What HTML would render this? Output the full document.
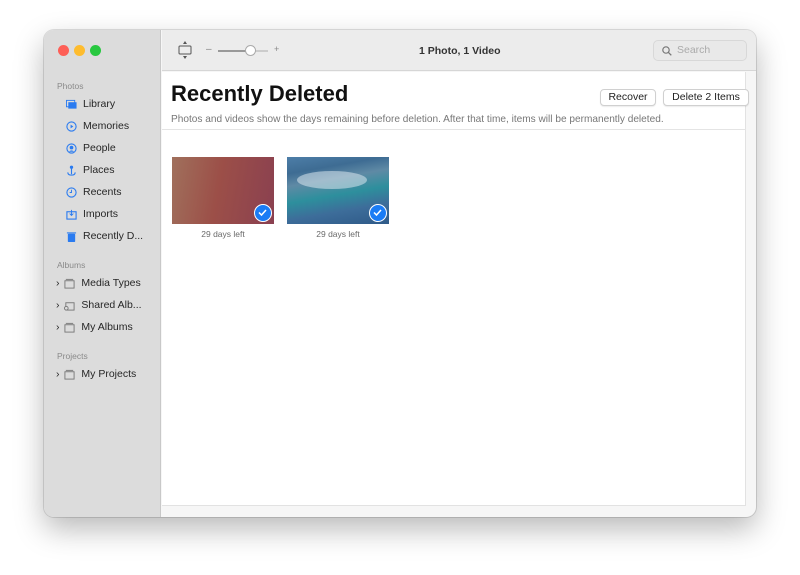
<!DOCTYPE html>
<html><head><style>
*{margin:0;padding:0;box-sizing:border-box}
body{width:800px;height:575px;background:#fff;font-family:"Liberation Sans",sans-serif;position:relative;overflow:hidden}
.win{position:absolute;left:44px;top:30px;width:712px;height:487px;border-radius:10px;overflow:hidden;background:#f6f6f6;box-shadow:0 12px 30px rgba(0,0,0,.28),0 0 0 1px rgba(0,0,0,.12)}
.side{position:absolute;left:0;top:0;width:117px;height:487px;background:#dcdcdc;border-right:1px solid #c8c8c8}
.dot{position:absolute;top:15px;width:11px;height:11px;border-radius:50%}
.sec{position:absolute;left:13px;font-size:8.5px;color:#8a8a8a}
.it{position:absolute;left:22px;font-size:10.5px;color:#262626;display:flex;align-items:center;gap:6px}
.ch{left:12px;gap:4px}
.ic{width:11px;height:11px;display:inline-block}
.tb{position:absolute;left:118px;top:0;right:0;height:41px;background:#ececec;border-bottom:1px solid #d6d6d6}
.main{position:absolute;left:118px;top:42px;width:584px;height:434px;background:#fff;border-right:1px solid #e2e2e2;border-bottom:1px solid #e2e2e2}
.btn{position:absolute;top:59px;height:17px;background:#fff;border:1px solid #d0d0d0;border-radius:4px;font-size:10.5px;color:#222;text-align:center;line-height:15px;box-shadow:0 1px 1px rgba(0,0,0,.08)}
.th{position:absolute;top:127px;width:102px;height:67px}
.chk{position:absolute;right:2px;bottom:2px;width:18px;height:18px;border-radius:50%;background:#1a7cf5;border:1.5px solid #fff}
.cap{position:absolute;top:199px;width:102px;text-align:center;font-size:8.5px;color:#6a6a6a}
</style></head><body>
<div class="win">
 <div class="side">
  <div class="dot" style="left:14px;background:#fe5f57"></div>
  <div class="dot" style="left:30px;background:#febc2e"></div>
  <div class="dot" style="left:46px;background:#28c840"></div>
  <div class="sec" style="top:51px">Photos</div>
  <div class="it" style="top:68px"><svg class="ic" viewBox="0 0 12 12"><rect x="0.5" y="1.5" width="9" height="7" fill="none" stroke="#2a7bf0"/><rect x="2.5" y="3.5" width="9" height="7" fill="#2a7bf0"/></svg>Library</div>
  <div class="it" style="top:90px"><svg class="ic" viewBox="0 0 12 12"><circle cx="6" cy="6" r="5" fill="none" stroke="#2a7bf0" stroke-width="1.2"/><path d="M5 4l3 2-3 2z" fill="#2a7bf0"/></svg>Memories</div>
  <div class="it" style="top:112px"><svg class="ic" viewBox="0 0 12 12"><circle cx="6" cy="6" r="5" fill="none" stroke="#2a7bf0" stroke-width="1.2"/><circle cx="6" cy="5" r="2" fill="#2a7bf0"/><path d="M3 9.5q3-3 6 0" fill="#2a7bf0"/></svg>People</div>
  <div class="it" style="top:134px"><svg class="ic" viewBox="0 0 12 12"><circle cx="6" cy="2.5" r="1.8" fill="#2a7bf0"/><path d="M6 4v6M2 8q0 3 4 3t4-3" stroke="#2a7bf0" stroke-width="1.2" fill="none"/></svg>Places</div>
  <div class="it" style="top:156px"><svg class="ic" viewBox="0 0 12 12"><circle cx="6" cy="6" r="5" fill="none" stroke="#2a7bf0" stroke-width="1.2"/><path d="M6 3v3H4" stroke="#2a7bf0" fill="none"/></svg>Recents</div>
  <div class="it" style="top:178px"><svg class="ic" viewBox="0 0 12 12"><rect x="1" y="3" width="10" height="8" fill="none" stroke="#2a7bf0" stroke-width="1.2"/><path d="M6 1v6M4 5l2 2 2-2" stroke="#2a7bf0" fill="none"/></svg>Imports</div>
  <div class="it" style="top:200px"><svg class="ic" viewBox="0 0 12 12"><rect x="2" y="3" width="8" height="9" rx="1" fill="#2a7bf0"/><rect x="1" y="1.5" width="10" height="1.2" fill="#2a7bf0"/></svg>Recently D...</div>
  <div class="sec" style="top:230px">Albums</div>
  <div class="it ch" style="top:247px">›<svg class="ic" viewBox="0 0 12 12"><rect x="1" y="3" width="10" height="8" fill="none" stroke="#777"/><path d="M2 1.5h8" stroke="#777"/></svg>&nbsp;Media Types</div>
  <div class="it ch" style="top:269px">›<svg class="ic" viewBox="0 0 12 12"><rect x="2" y="3" width="9" height="8" fill="none" stroke="#777"/><circle cx="2.5" cy="9" r="2" fill="#dcdcdc" stroke="#777"/></svg>&nbsp;Shared Alb...</div>
  <div class="it ch" style="top:291px">›<svg class="ic" viewBox="0 0 12 12"><rect x="1" y="3" width="10" height="8" fill="none" stroke="#777"/><path d="M2 1.5h8" stroke="#777"/></svg>&nbsp;My Albums</div>
  <div class="sec" style="top:321px">Projects</div>
  <div class="it ch" style="top:338px">›<svg class="ic" viewBox="0 0 12 12"><rect x="1" y="3" width="10" height="8" fill="none" stroke="#777"/><path d="M2 1.5h8" stroke="#777"/></svg>&nbsp;My Projects</div>
 </div>
 <div class="tb">
  <svg style="position:absolute;left:16px;top:11px" width="14" height="18" viewBox="0 0 14 18"><rect x="1" y="5" width="12" height="8" rx="1" fill="none" stroke="#555"/><path d="M7 0l-2 3h4zM7 18l-2-3h4z" fill="#555"/></svg>
  <div style="position:absolute;left:44px;top:14px;font-size:10px;color:#888">–</div>
  <div style="position:absolute;left:56px;top:20px;width:32px;height:2px;background:#999"></div>
  <div style="position:absolute;left:88px;top:20px;width:18px;height:2px;background:#ccc"></div>
  <div style="position:absolute;left:83px;top:15px;width:11px;height:11px;border-radius:50%;background:#fff;border:1px solid #aaa"></div>
  <div style="position:absolute;left:112px;top:14px;font-size:9px;color:#888">+</div>
  <div style="position:absolute;left:257px;top:15px;font-size:10.5px;font-weight:bold;color:#333">1 Photo, 1 Video</div>
  <div style="position:absolute;left:491px;top:10px;width:94px;height:21px;border:1px solid #d8d8d8;border-radius:5px;background:#e9e9e9;font-size:10.5px;color:#aaa;line-height:19px;padding-left:23px">Search
   <svg style="position:absolute;left:8px;top:5px" width="10" height="10" viewBox="0 0 10 10"><circle cx="4" cy="4" r="3.2" fill="none" stroke="#777" stroke-width="1.2"/><path d="M6.3 6.3L9.3 9.3" stroke="#777" stroke-width="1.3"/></svg></div>
 </div>
 <div class="main">
  <div style="position:absolute;left:0;top:57px;width:584px;height:1px;background:#e4e4e4"></div>
 </div>
 <div style="position:absolute;left:127px;top:51px;font-size:22px;font-weight:bold;color:#111">Recently Deleted</div>
 <div style="position:absolute;left:127px;top:84px;font-size:10.1px;color:#777">Photos and videos show the days remaining before deletion. After that time, items will be permanently deleted.</div>
 <div class="btn" style="left:556px;width:56px">Recover</div>
 <div class="btn" style="left:619px;width:86px">Delete 2 Items</div>
 <div class="th" style="left:128px;background:linear-gradient(100deg,#a0705c 0%,#9c4f48 45%,#8a4050 100%)"><div class="chk"><svg width="15" height="15" viewBox="0 0 15 15"><path d="M4 7.5l2.5 2.5 4.5-5" stroke="#fff" stroke-width="1.5" fill="none"/></svg></div></div>
 <div class="th" style="left:243px;background:linear-gradient(170deg,#4d7ea8 0%,#3e6c93 20%,#5f8aa5 35%,#2d8f9d 55%,#3d6d9a 75%,#2f5a88 100%)"><div style="position:absolute;left:10px;top:14px;width:70px;height:18px;border-radius:50%;background:rgba(230,240,245,.5)"></div><div class="chk"><svg width="15" height="15" viewBox="0 0 15 15"><path d="M4 7.5l2.5 2.5 4.5-5" stroke="#fff" stroke-width="1.5" fill="none"/></svg></div></div>
 <div class="cap" style="left:128px">29 days left</div>
 <div class="cap" style="left:243px">29 days left</div>
</div>
</body></html>
